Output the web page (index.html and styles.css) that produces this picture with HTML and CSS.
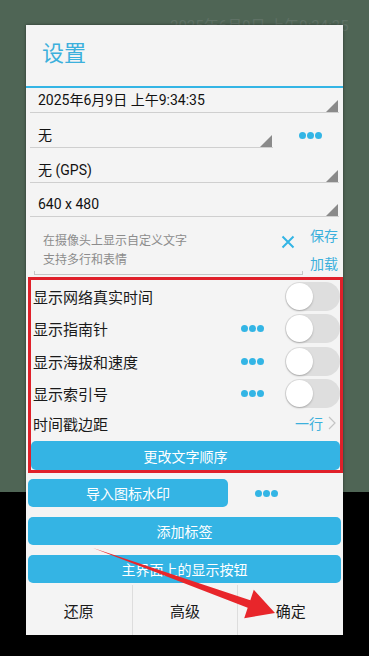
FILE: index.html
```html
<!DOCTYPE html>
<html lang="zh">
<head>
<meta charset="utf-8">
<title>设置</title>
<link rel="stylesheet" href="styles.css">
</head>
<body>
<div class="screen">
  <div class="bg-caption">2025年6月9日 上午9:34:35</div>
  <div class="dialog">
    <div class="header"><h1 class="title">设置</h1></div>

    <div class="spinner spinner-first">
      <span class="spinner-text">2025年6月9日 上午9:34:35</span>
      <span class="tri"></span>
    </div>

    <div class="spinner-row">
      <div class="spinner spinner-short">
        <span class="spinner-text">无</span>
        <span class="tri"></span>
      </div>
      <div class="dots-cell"><span class="dots"><i></i><i></i><i></i></span></div>
    </div>

    <div class="spinner">
      <span class="spinner-text">无 (GPS)</span>
      <span class="tri"></span>
    </div>

    <div class="spinner spinner-last">
      <span class="spinner-text">640 x 480</span>
      <span class="tri"></span>
    </div>

    <div class="note">
      <div class="note-field">
        <div class="note-body">
          <div class="note-hint">在摄像头上显示自定义文字<br>支持多行和表情</div>
          <svg class="clear-icon" width="14" height="14" viewBox="0 0 14 14"><path d="M1.5 1.5 L12.5 12.5 M12.5 1.5 L1.5 12.5" stroke="#33b5e5" stroke-width="2" fill="none"/></svg>
        </div>
        <div class="note-line"></div>
      </div>
      <div class="note-actions">
        <span class="link">保存</span>
        <span class="link">加载</span>
      </div>
    </div>

    <div class="highlight">
      <div class="row">
        <span class="row-label">显示网络真实时间</span>
        <span class="toggle"><span class="knob"></span></span>
      </div>
      <div class="row">
        <span class="row-label">显示指南针</span>
        <span class="dots"><i></i><i></i><i></i></span>
        <span class="toggle"><span class="knob"></span></span>
      </div>
      <div class="row">
        <span class="row-label">显示海拔和速度</span>
        <span class="dots"><i></i><i></i><i></i></span>
        <span class="toggle"><span class="knob"></span></span>
      </div>
      <div class="row">
        <span class="row-label">显示索引号</span>
        <span class="dots"><i></i><i></i><i></i></span>
        <span class="toggle"><span class="knob"></span></span>
      </div>
      <div class="row row-margin">
        <span class="row-label">时间戳边距</span>
        <span class="row-value">一行</span>
        <svg class="chev" width="8" height="14" viewBox="0 0 8 14"><path d="M1 1 L7 7 L1 13" stroke="#c4c4c4" stroke-width="1.2" fill="none"/></svg>
      </div>
      <div class="btn btn-in">更改文字顺序</div>
    </div>

    <div class="btn-row">
      <div class="btn btn-import">导入图标水印</div>
      <div class="dots-cell2"><span class="dots"><i></i><i></i><i></i></span></div>
    </div>
    <div class="btn btn-wide">添加标签</div>
    <div class="btn btn-wide">主界面上的显示按钮</div>

    <div class="footer">
      <div class="footer-btn">还原</div>
      <div class="footer-btn">高级</div>
      <div class="footer-btn">确定</div>
    </div>
  </div>

  <svg class="arrow" width="369" height="656" viewBox="0 0 369 656">
    <polygon points="93,548 250.3,600.2 253.8,589.8 275,613 244.2,618.2 247.7,607.8" fill="#e8262b"/>
  </svg>
</div>
</body>
</html>
```

FILE: styles.css
```css
* { box-sizing: border-box; }

html, body {
  margin: 0;
  padding: 0;
}

body {
  width: 369px;
  height: 656px;
  overflow: hidden;
  background: linear-gradient(to bottom, #4f6555 0, #4f6555 492px, #000 492px, #000 100%);
  font-family: "Roboto", "Noto Sans CJK SC", sans-serif;
  color: #1a1a1a;
}

.screen {
  position: relative;
  width: 369px;
  height: 656px;
  padding-top: 25px;
  padding-left: 26px;
}

.bg-caption {
  position: absolute;
  left: 170px;
  top: 17px;
  font-size: 15px;
  line-height: 18px;
  color: #5f7165;
  white-space: nowrap;
}

.dialog {
  position: relative;
  width: 317px;
  background: #f4f4f4;
  box-shadow: 0 0 3px rgba(0, 0, 0, 0.45);
}

.header {
  height: 63px;
  border-bottom: 2px solid #33b5e5;
  display: flex;
  align-items: center;
  padding-left: 16px;
  padding-bottom: 4px;
}

.title {
  margin: 0;
  font-size: 22px;
  font-weight: normal;
  color: #3cb0dc;
  line-height: 28px;
}

/* spinners */
.spinner {
  display: flex;
  align-items: flex-end;
  height: 35px;
  margin: 0 4px;
  border-bottom: 1px solid #cfcfcf;
}

.spinner-first {
  height: 25px;
}

.spinner-last {
  height: 34px;
}

.spinner-text {
  flex: 1;
  padding-left: 8px;
  font-size: 14px;
  line-height: 24px;
  color: #111;
  white-space: nowrap;
}

.tri {
  width: 12px;
  height: 12px;
  background: #8a8a8a;
  clip-path: polygon(100% 0, 100% 100%, 0 100%);
  margin-right: 1px;
}

.spinner-row {
  display: flex;
  align-items: stretch;
}

.spinner-short {
  width: 243px;
  margin-right: 0;
}

.dots-cell {
  flex: 1;
  display: flex;
  align-items: flex-end;
  padding-bottom: 9px;
  padding-left: 26px;
}

.dots {
  display: inline-flex;
  gap: 1px;
}

.dots i {
  width: 7px;
  height: 7px;
  border-radius: 50%;
  background: #33b5e5;
}

/* note */
.note {
  display: flex;
  height: 60px;
}

.note-field {
  width: 269px;
  margin-left: 8px;
  display: flex;
  flex-direction: column;
}

.note-body {
  display: flex;
  justify-content: space-between;
  align-items: flex-start;
  padding: 15px 8px 0 9px;
  height: 54px;
}

.note-hint {
  font-size: 12px;
  line-height: 19px;
  color: #8c8c8c;
}

.clear-icon {
  margin-top: 3px;
}

.note-line {
  height: 4px;
  border: 1px solid #c6c6c6;
  border-top: none;
}

.note-actions {
  flex: 1;
  display: flex;
  flex-direction: column;
  align-items: center;
  padding-top: 9px;
  padding-left: 2px;
  gap: 8px;
}

.link {
  font-size: 14px;
  line-height: 20px;
  color: #3cb0dc;
}

/* highlight box */
.highlight {
  margin-left: 2px;
  border: 3px solid #e0202a;
  display: flex;
  flex-direction: column;
}

.row {
  display: flex;
  align-items: center;
  height: 32.5px;
  padding-left: 2px;
}

.row-label {
  flex: 1;
  font-size: 15px;
  color: #1a1a1a;
}

.row .dots {
  margin-right: 21px;
}

.toggle {
  width: 55px;
  height: 29px;
  border-radius: 15px;
  background: #dedede;
  display: flex;
  align-items: center;
  padding-left: 1px;
}

.knob {
  width: 27px;
  height: 27px;
  border-radius: 50%;
  background: #fff;
  box-shadow: 0 1px 2px rgba(0, 0, 0, 0.25);
}

.row-margin {
  height: 26px;
  padding-right: 4px;
}

.row-value {
  font-size: 14px;
  color: #3cb0dc;
  margin-right: 5px;
}

.btn {
  height: 29px;
  border-radius: 5px;
  background: #34b4e4;
  color: #fff;
  font-size: 14px;
  display: flex;
  align-items: center;
  justify-content: center;
}

.btn-in {
  margin-top: 5px;
}

.btn-row {
  display: flex;
  align-items: center;
  margin-top: 6px;
  margin-left: 2px;
}

.btn-import {
  width: 200px;
  height: 28px;
}

.dots-cell2 {
  flex: 1;
  padding-left: 27px;
  display: flex;
}

.btn-wide {
  margin: 10px 2px 0 2px;
  height: 28px;
}

.footer {
  display: grid;
  grid-template-columns: 1fr 1fr 1fr;
  height: 50px;
  margin-top: 2px;
}

.footer-btn {
  display: flex;
  align-items: center;
  justify-content: center;
  font-size: 15px;
  color: #1a1a1a;
  border-left: 1px solid #dddddd;
}

.footer-btn:first-child {
  border-left: none;
}

.arrow {
  position: absolute;
  left: 0;
  top: 0;
  pointer-events: none;
}
```
